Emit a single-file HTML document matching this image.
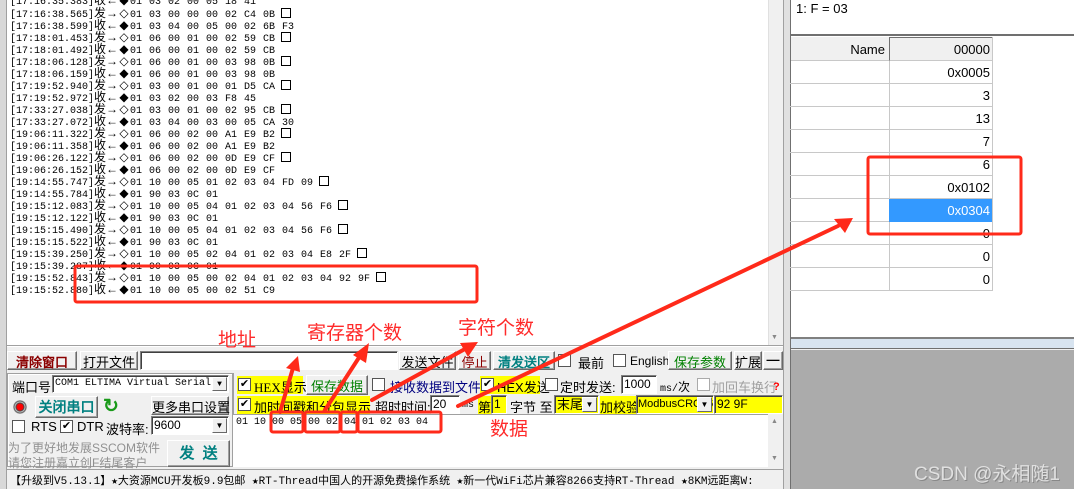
<!DOCTYPE html>
<html><head><meta charset="utf-8"><style>
*{margin:0;padding:0;box-sizing:border-box}
body{width:1074px;height:489px;overflow:hidden;background:#f0f0f0;position:relative;font-family:"Liberation Sans","WenQuanYi Zen Hei",sans-serif;font-size:12px;color:#000}
.a{position:absolute;white-space:nowrap}
#log{position:absolute;left:7px;top:0;width:761px;height:345px;background:#fff;overflow:hidden}
.ln{position:absolute;left:3px;height:12px;line-height:12px;font-family:"Liberation Mono",monospace;font-size:10px;white-space:pre;color:#000}
.ln .c{font-family:"WenQuanYi Zen Hei",sans-serif;font-size:12px;display:inline-block;width:12px;text-align:center}
.ln .h{word-spacing:1px}
.ln .b{display:inline-block;width:10px;height:10px;border:1px solid #000;vertical-align:-1px;margin-left:6px}
.btn{position:absolute;background:#f0f0f0;border:1px solid;border-color:#fff #696969 #696969 #fff;box-shadow:inset -1px -1px 0 #a0a0a0;text-align:center;font-size:13px;white-space:nowrap}
.inp{position:absolute;background:#fff;border:1px solid;border-color:#808080 #fff #fff #808080;box-shadow:inset 1px 1px 0 #404040;white-space:nowrap;padding-left:2px;overflow:hidden}
.cb{position:absolute;width:13px;height:13px;background:#fff;border:1px solid #555;font-size:11px;line-height:11px;text-align:center}
.y{background:#ffff00}
.dd{position:absolute;right:1px;top:1px;bottom:1px;width:15px;background:#f0f0f0;border:1px solid;border-color:#fff #696969 #696969 #fff;font-size:8px;text-align:center;line-height:14px}
.row{position:absolute;left:790px;width:202px;height:23px;border-bottom:1px solid #c8c8c8}
.row span{position:absolute;right:2px;top:4px;font-size:13px;font-family:"Liberation Sans",sans-serif}
.red{color:#ff2a2a;font-size:19px}
</style></head><body>
<div class="a" style="left:0;top:0;width:7px;height:489px;background:#d8d8d8;border-right:1px solid #a0a0a0"></div>
<div id="log">
<div class="ln" style="top:-6px">[17:16:35.383]<span class="c">收</span><span class="c">←</span><span class="c">◆</span><span class="h">01 03 02 00 05 18 41</span></div>
<div class="ln" style="top:7px">[17:16:38.565]<span class="c">发</span><span class="c">→</span><span class="c">◇</span><span class="h">01 03 00 00 00 02 C4 0B</span><span class="b"></span></div>
<div class="ln" style="top:19px">[17:16:38.599]<span class="c">收</span><span class="c">←</span><span class="c">◆</span><span class="h">01 03 04 00 05 00 02 6B F3</span></div>
<div class="ln" style="top:31px">[17:18:01.453]<span class="c">发</span><span class="c">→</span><span class="c">◇</span><span class="h">01 06 00 01 00 02 59 CB</span><span class="b"></span></div>
<div class="ln" style="top:43px">[17:18:01.492]<span class="c">收</span><span class="c">←</span><span class="c">◆</span><span class="h">01 06 00 01 00 02 59 CB</span></div>
<div class="ln" style="top:55px">[17:18:06.128]<span class="c">发</span><span class="c">→</span><span class="c">◇</span><span class="h">01 06 00 01 00 03 98 0B</span><span class="b"></span></div>
<div class="ln" style="top:67px">[17:18:06.159]<span class="c">收</span><span class="c">←</span><span class="c">◆</span><span class="h">01 06 00 01 00 03 98 0B</span></div>
<div class="ln" style="top:79px">[17:19:52.940]<span class="c">发</span><span class="c">→</span><span class="c">◇</span><span class="h">01 03 00 01 00 01 D5 CA</span><span class="b"></span></div>
<div class="ln" style="top:91px">[17:19:52.972]<span class="c">收</span><span class="c">←</span><span class="c">◆</span><span class="h">01 03 02 00 03 F8 45</span></div>
<div class="ln" style="top:103px">[17:33:27.038]<span class="c">发</span><span class="c">→</span><span class="c">◇</span><span class="h">01 03 00 01 00 02 95 CB</span><span class="b"></span></div>
<div class="ln" style="top:115px">[17:33:27.072]<span class="c">收</span><span class="c">←</span><span class="c">◆</span><span class="h">01 03 04 00 03 00 05 CA 30</span></div>
<div class="ln" style="top:127px">[19:06:11.322]<span class="c">发</span><span class="c">→</span><span class="c">◇</span><span class="h">01 06 00 02 00 A1 E9 B2</span><span class="b"></span></div>
<div class="ln" style="top:139px">[19:06:11.358]<span class="c">收</span><span class="c">←</span><span class="c">◆</span><span class="h">01 06 00 02 00 A1 E9 B2</span></div>
<div class="ln" style="top:151px">[19:06:26.122]<span class="c">发</span><span class="c">→</span><span class="c">◇</span><span class="h">01 06 00 02 00 0D E9 CF</span><span class="b"></span></div>
<div class="ln" style="top:163px">[19:06:26.152]<span class="c">收</span><span class="c">←</span><span class="c">◆</span><span class="h">01 06 00 02 00 0D E9 CF</span></div>
<div class="ln" style="top:175px">[19:14:55.747]<span class="c">发</span><span class="c">→</span><span class="c">◇</span><span class="h">01 10 00 05 01 02 03 04 FD 09</span><span class="b"></span></div>
<div class="ln" style="top:187px">[19:14:55.784]<span class="c">收</span><span class="c">←</span><span class="c">◆</span><span class="h">01 90 03 0C 01</span></div>
<div class="ln" style="top:199px">[19:15:12.083]<span class="c">发</span><span class="c">→</span><span class="c">◇</span><span class="h">01 10 00 05 04 01 02 03 04 56 F6</span><span class="b"></span></div>
<div class="ln" style="top:211px">[19:15:12.122]<span class="c">收</span><span class="c">←</span><span class="c">◆</span><span class="h">01 90 03 0C 01</span></div>
<div class="ln" style="top:223px">[19:15:15.490]<span class="c">发</span><span class="c">→</span><span class="c">◇</span><span class="h">01 10 00 05 04 01 02 03 04 56 F6</span><span class="b"></span></div>
<div class="ln" style="top:235px">[19:15:15.522]<span class="c">收</span><span class="c">←</span><span class="c">◆</span><span class="h">01 90 03 0C 01</span></div>
<div class="ln" style="top:247px">[19:15:39.250]<span class="c">发</span><span class="c">→</span><span class="c">◇</span><span class="h">01 10 00 05 02 04 01 02 03 04 E8 2F</span><span class="b"></span></div>
<div class="ln" style="top:259px">[19:15:39.287]<span class="c">收</span><span class="c">←</span><span class="c">◆</span><span class="h">01 90 03 0C 01</span></div>
<div class="ln" style="top:271px">[19:15:52.843]<span class="c">发</span><span class="c">→</span><span class="c">◇</span><span class="h">01 10 00 05 00 02 04 01 02 03 04 92 9F</span><span class="b"></span></div>
<div class="ln" style="top:283px">[19:15:52.880]<span class="c">收</span><span class="c">←</span><span class="c">◆</span><span class="h">01 10 00 05 00 02 51 C9</span></div>
</div>
<div class="a" style="left:768px;top:0;width:15px;height:345px;background:#f0f0f0;border-left:1px solid #e0e0e0"></div>
<div class="a" style="left:771px;top:334px;font-size:7px;color:#888">▼</div>
<div class="a" style="left:7px;top:345px;width:776px;height:2px;border-top:1px solid #a0a0a0;background:#fff"></div>

<!-- toolbar -->
<div class="btn" style="left:7px;top:351px;width:70px;height:19px;color:#8b0000;font-weight:bold">清除窗口</div>
<div class="btn" style="left:80px;top:351px;width:58px;height:19px">打开文件</div>
<div class="inp" style="left:140px;top:351px;width:258px;height:19px"></div>
<div class="btn" style="left:399px;top:351px;width:57px;height:19px">发送文件</div>
<div class="btn" style="left:458px;top:351px;width:33px;height:19px;color:#8b0000">停止</div>
<div class="btn" style="left:493px;top:351px;width:62px;height:19px;color:#008080;font-weight:bold">清发送区</div>
<div class="cb" style="left:558px;top:354px"></div><div class="a" style="left:578px;top:353px;font-size:13px">最前</div>
<div class="cb" style="left:613px;top:354px"></div><div class="a" style="left:630px;top:354px;font-size:12px">English</div>
<div class="btn" style="left:668px;top:351px;width:64px;height:19px;color:#008000">保存参数</div>
<div class="btn" style="left:734px;top:351px;width:28px;height:19px">扩展</div>
<div class="btn" style="left:763px;top:351px;width:20px;height:19px;font-weight:bold">—</div>

<!-- left panel -->
<div class="a" style="left:7px;top:373px;width:226px;height:94px;border:1px solid #a0a0a0;box-shadow:inset 1px 1px 0 #fff"></div>
<div class="a" style="left:12px;top:377px;font-size:13px">端口号</div>
<div class="inp" style="left:52px;top:375px;width:177px;height:18px;font-family:'Liberation Mono',monospace;font-size:10px;line-height:16px">COM1 ELTIMA Virtual Serial<div class="dd">▼</div></div>
<div class="a" style="left:13px;top:400px;width:14px;height:14px;border-radius:50%;background:radial-gradient(circle,#f00 0 3px,#444 4px,#ccc 5px,#555 6px,#ddd 7px)"></div>
<div class="btn" style="left:35px;top:396px;width:63px;height:22px;color:#008080;font-weight:bold;font-size:14px;line-height:20px">关闭串口</div>
<div class="a" style="left:103px;top:395px;color:#1a9a1a;font-size:19px;font-weight:bold">↻</div>
<div class="btn" style="left:151px;top:396px;width:78px;height:19px">更多串口设置</div>
<div class="cb" style="left:12px;top:420px"></div><div class="a" style="left:31px;top:419px;font-size:13px">RTS</div>
<div class="cb" style="left:60px;top:420px">✔</div><div class="a" style="left:77px;top:419px;font-size:13px">DTR</div>
<div class="a" style="left:106px;top:419px;font-size:13px">波特率:</div>
<div class="inp" style="left:151px;top:416px;width:78px;height:19px;font-size:12px;line-height:17px">9600<div class="dd">▼</div></div>
<div class="a" style="left:8px;top:439px;color:#909090;font-size:12px">为了更好地发展SSCOM软件</div>
<div class="a" style="left:8px;top:454px;color:#909090;font-size:12px">请您注册嘉立创F结尾客户</div>
<div class="btn" style="left:167px;top:440px;width:63px;height:27px;color:#008080;font-weight:bold;font-size:15px;line-height:25px">发&nbsp; 送</div>

<!-- right controls -->
<div class="a" style="left:233px;top:373px;width:550px;height:94px;border-left:1px solid #a0a0a0"></div>
<div class="a y" style="left:237px;top:376px;width:66px;height:18px"></div>
<div class="cb" style="left:238px;top:378px">✔</div><div class="a" style="left:254px;top:377px;font-size:13px;font-family:'Liberation Serif','WenQuanYi Zen Hei',serif">HEX显示</div>
<div class="btn" style="left:306px;top:375px;width:62px;height:20px;color:#008000">保存数据</div>
<div class="cb" style="left:372px;top:378px"></div><div class="a" style="left:390px;top:377px;color:#000080;font-size:13px">接收数据到文件</div>
<div class="a y" style="left:480px;top:376px;width:60px;height:18px"></div>
<div class="cb" style="left:481px;top:378px">✔</div><div class="a" style="left:497px;top:377px;font-size:13px">HEX发送</div>
<div class="cb" style="left:545px;top:378px"></div><div class="a" style="left:560px;top:377px;font-size:13px">定时发送:</div>
<div class="inp" style="left:621px;top:375px;width:36px;height:19px;line-height:17px">1000</div>
<div class="a" style="left:660px;top:378px;font-family:'Liberation Mono',monospace;font-size:10px">ms/<span style="font-size:12px;font-family:'WenQuanYi Zen Hei'">次</span></div>
<div class="cb" style="left:697px;top:378px;border-color:#aaa"></div><div class="a" style="left:712px;top:377px;color:#a0a0a0;font-size:13px">加回车换行</div>
<div class="a" style="left:773px;top:381px;color:#f00;font-weight:bold;font-size:11px">?</div>

<div class="a y" style="left:237px;top:396px;width:133px;height:18px"></div>
<div class="cb" style="left:238px;top:398px">✔</div><div class="a" style="left:254px;top:397px;font-size:13px">加时间戳和分包显示</div>
<div class="a" style="left:375px;top:397px;font-size:13px">超时时间:</div>
<div class="inp" style="left:430px;top:395px;width:30px;height:19px;line-height:17px">20</div>
<div class="a" style="left:462px;top:400px;font-size:10px;font-family:'Liberation Mono',monospace">ms</div>
<div class="a y" style="left:478px;top:396px;width:13px;height:18px"></div><div class="a" style="left:478px;top:397px;font-size:13px">第</div>
<div class="inp y" style="left:491px;top:395px;width:16px;height:19px;line-height:17px">1</div>
<div class="a" style="left:510px;top:397px;font-size:13px">字节 至</div>
<div class="inp y" style="left:554px;top:395px;width:45px;height:19px;font-size:13px;line-height:17px">末尾<div class="dd">▼</div></div>
<div class="a y" style="left:600px;top:396px;width:36px;height:18px"></div><div class="a" style="left:600px;top:397px;font-size:13px">加校验</div>
<div class="inp y" style="left:636px;top:395px;width:78px;height:19px;font-size:11px;line-height:17px;padding-left:1px">ModbusCRC16<div class="dd">▼</div></div>
<div class="inp y" style="left:714px;top:395px;width:69px;height:19px;font-size:12px;line-height:17px">92 9F</div>

<div class="a" style="left:233px;top:414px;width:535px;height:53px;background:#fff;border-top:1px solid #a0a0a0"></div>
<div class="a" style="left:768px;top:414px;width:15px;height:53px;background:#f0f0f0"></div>
<div class="a" style="left:771px;top:418px;font-size:7px;color:#888">▲</div>
<div class="a" style="left:771px;top:455px;font-size:7px;color:#888">▼</div>
<div class="a" style="left:236px;top:417px;font-family:'Liberation Mono',monospace;font-size:10px;word-spacing:0">01 10 00 05 00 02 04 01 02 03 04</div>

<!-- status bar -->
<div class="a" style="left:7px;top:469px;width:778px;height:20px;border-top:1px solid #a0a0a0;background:#f0f0f0"></div>
<div class="a" style="left:10px;top:472px;font-size:11px;font-family:'Liberation Mono','WenQuanYi Zen Hei',monospace">【升级到V5.13.1】★大资源MCU开发板9.9包邮 ★RT-Thread中国人的开源免费操作系统 ★新一代WiFi芯片兼容8266支持RT-Thread ★8KM远距离W:</div>

<!-- right panel -->
<div class="a" style="left:783px;top:0;width:8px;height:489px;background:#e0e0e0;border-left:1px solid #a0a0a0;border-right:1px solid #707070"></div>
<div class="a" style="left:791px;top:0;width:283px;height:340px;background:#fff"></div>
<div class="a" style="left:796px;top:1px;font-size:13px;font-family:'Liberation Sans'">1: F = 03</div>
<div class="a" style="left:791px;top:34px;width:283px;height:2px;background:#707070"></div>
<div class="a" style="left:791px;top:37px;width:98px;height:24px;background:#f0f0f0;border-bottom:1px solid #c8c8c8"><span style="position:absolute;right:4px;top:5px;font-size:13px">Name</span></div>
<div class="a" style="left:889px;top:37px;width:103px;height:24px;background:#f0f0f0;border-left:1px solid #707070;border-top:1px solid #707070;border-bottom:1px solid #c8c8c8"><span style="position:absolute;right:2px;top:4px;font-size:13px">00000</span></div>
<div class="a" style="left:889px;top:61px;width:1px;height:230px;background:#c8c8c8"></div>
<div class="a" style="left:992px;top:37px;width:1px;height:254px;background:#c8c8c8"></div>
<div class="row" style="top:61px"><span>0x0005</span></div>
<div class="row" style="top:84px"><span>3</span></div>
<div class="row" style="top:107px"><span>13</span></div>
<div class="row" style="top:130px"><span>7</span></div>
<div class="row" style="top:153px"><span>6</span></div>
<div class="row" style="top:176px"><span>0x0102</span></div>
<div class="row" style="top:199px"><div class="a" style="left:99px;top:0;width:103px;height:23px;background:#3399ff"></div><span style="color:#fff">0x0304</span></div>
<div class="row" style="top:222px"><span>0</span></div>
<div class="row" style="top:245px"><span>0</span></div>
<div class="row" style="top:268px"><span>0</span></div>
<div class="a" style="left:791px;top:337px;width:283px;height:2px;background:#808080"></div>
<div class="a" style="left:791px;top:339px;width:283px;height:10px;background:#d8e4f0;border-bottom:1px solid #707070"></div>
<div class="a" style="left:791px;top:350px;width:283px;height:139px;background:#ababab"></div>
<div class="a" style="left:914px;top:459px;font-size:19px;color:#e0e0e0;text-shadow:1px 1px 0 #888">CSDN @永相随1</div>

<!-- annotations -->
<div class="a red" style="left:218px;top:325px">地址</div>
<div class="a red" style="left:307px;top:318px">寄存器个数</div>
<div class="a red" style="left:458px;top:313px">字符个数</div>
<div class="a red" style="left:490px;top:414px">数据</div>
<svg class="a" style="left:0;top:0" width="1074" height="489">
<g fill="none" stroke="#ff2a1a" stroke-width="3">
<rect x="75" y="266" width="402" height="36" rx="2"/>
<rect x="868" y="157" width="153" height="77" rx="2"/>
<rect x="271" y="412" width="32" height="20" rx="2"/>
<rect x="305" y="412" width="35" height="20" rx="2"/>
<rect x="341" y="412" width="16" height="20" rx="2"/>
<rect x="358" y="412" width="83" height="20" rx="2"/>
</g>
<g stroke="#ff2a1a" stroke-width="4" stroke-linecap="round">
<line x1="280" y1="412" x2="293" y2="368"/>
<line x1="325" y1="410" x2="360" y2="356"/>
<line x1="372" y1="400" x2="465" y2="349"/>
<line x1="458" y1="406" x2="838" y2="226"/>
</g>
<g fill="#ff2a1a">
<polygon points="298,356 300,372 286,368"/>
<polygon points="369,343 366,363 353,355"/>
<polygon points="478,342 468,357 460,343"/>
<polygon points="853,218 845,233 834,219"/>
</g>
</svg>
</body></html>
